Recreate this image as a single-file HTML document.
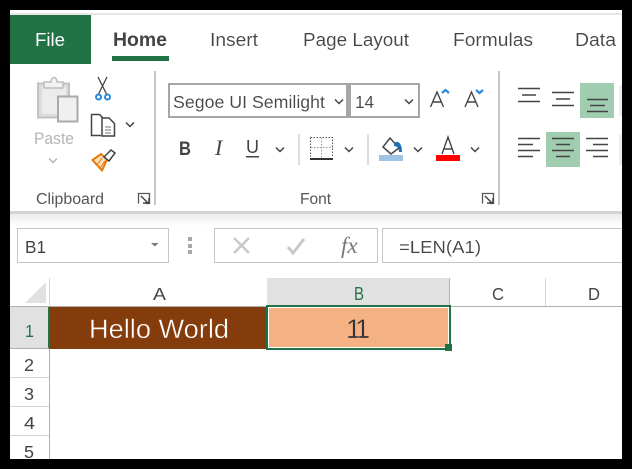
<!DOCTYPE html>
<html><head><meta charset="utf-8"><style>
html,body{margin:0;padding:0;background:#000;width:632px;height:469px;overflow:hidden}
svg{display:block;position:absolute;left:0;top:0}
text{font-family:"Liberation Sans",sans-serif;fill:#444}
.t{stroke:#fff;stroke-width:.1px}
</style></head><body>
<svg width="632" height="469" viewBox="0 0 632 469" xmlns="http://www.w3.org/2000/svg">
<defs><linearGradient id="f" x1="0" y1="0" x2="0" y2="1"><stop offset="0" stop-color="#ececec"/><stop offset="1" stop-color="#fff"/></linearGradient></defs>
<rect width="632" height="469" fill="#000"/>
<rect x="10" y="10" width="612" height="449" fill="#fff"/>
<rect x="10" y="13" width="612" height="2" fill="#e6e6e6"/>
<!-- tabs -->
<rect x="10" y="15" width="81" height="49" fill="#217346"/>
<text x="35" y="46" font-size="18" textLength="30" lengthAdjust="spacingAndGlyphs" style="fill:#fff">File</text>
<text x="113" y="46" font-size="19" font-weight="bold" textLength="54" lengthAdjust="spacingAndGlyphs">Home</text>
<rect x="112" y="56" width="57" height="5" fill="#217346"/>
<text class="t" x="210" y="46" font-size="18" textLength="48" lengthAdjust="spacingAndGlyphs">Insert</text>
<text class="t" x="303" y="46" font-size="18" textLength="106" lengthAdjust="spacingAndGlyphs">Page Layout</text>
<text class="t" x="453" y="46" font-size="18" textLength="80" lengthAdjust="spacingAndGlyphs">Formulas</text>
<text class="t" x="575" y="46" font-size="18" textLength="41" lengthAdjust="spacingAndGlyphs">Data</text>
<!-- clipboard group -->
<path d="M38 83.500h31v34H38z" fill="#dcdcdc" stroke="#c2c2c2" stroke-width="2"/>
<rect x="42" y="87" width="24" height="27" fill="#ececec"/>
<path d="M44 82h7c0-6 6-6 6 0h6v6H44z" fill="#f2f2f2" stroke="#bdbdbd" stroke-width="1.500"/>
<path d="M58 96.500h19.500v25H58z" fill="#f0f0f0" stroke="#a9a9a9" stroke-width="2"/>
<text x="34" y="144" font-size="17" textLength="40" lengthAdjust="spacingAndGlyphs" style="fill:#b5b5b5">Paste</text>
<path d="M49 158.500l4 4 4-4" fill="none" stroke="#b5b5b5" stroke-width="1.500"/>
<path d="M98 77l8.500 17M107 77l-8.500 17" fill="none" stroke="#444" stroke-width="1.300"/>
<circle cx="98.500" cy="97" r="2.500" fill="#fff" stroke="#2b88d8" stroke-width="2"/>
<circle cx="107.500" cy="97" r="2.500" fill="#fff" stroke="#2b88d8" stroke-width="2"/>
<path d="M101 135.500h-9.500v-21h8l3 3" fill="none" stroke="#444" stroke-width="1.500"/>
<path d="M102 118h7l5.500 5.500V136H102z" fill="#fff" stroke="#444" stroke-width="1.500"/>
<path d="M105 127h6M105 130h6M105 133h6" stroke="#777" stroke-width="1"/>
<path d="M126 122.500l4 4 4-4" fill="none" stroke="#444" stroke-width="1.500"/>
<path d="M92.500 160l9.500 10.500 5-11-6-5.500z" fill="#fbe0b8" stroke="#e3780c" stroke-width="2"/>
<path d="M97 165l5-7M100 168l5-7" stroke="#e3780c" stroke-width="1"/>
<path d="M104 157l7-7 4 3-6 8z" fill="#fff" stroke="#444" stroke-width="1.500"/>
<text x="36" y="204" font-size="15.500" textLength="68" lengthAdjust="spacingAndGlyphs" style="fill:#555">Clipboard</text>
<path d="M138.500 203.500v-10h10M145 193.500h4.500v10h-4" fill="none" stroke="#555" stroke-width="1.300"/>
<path d="M141 196l7 7M143 203h6v-5" fill="none" stroke="#444" stroke-width="1.500"/>
<rect x="154" y="71" width="2" height="134" fill="#c6c6c6"/>
<!-- font -->
<rect x="169" y="84" width="178" height="33" fill="#fff" stroke="#a6a6a6" stroke-width="2"/>
<rect x="350" y="84" width="69" height="33" fill="#fff" stroke="#a6a6a6" stroke-width="2"/>
<rect x="347" y="83" width="4" height="35" fill="#a6a6a6"/>
<text class="t" x="173" y="108" font-size="17.500" textLength="152" lengthAdjust="spacingAndGlyphs">Segoe UI Semilight</text>
<path d="M335 99.500l4 4 4-4M405 99.500l4 4 4-4" fill="none" stroke="#444" stroke-width="1.500"/>
<text class="t" x="355" y="108" font-size="17.500" textLength="19" lengthAdjust="spacingAndGlyphs">14</text>
<path d="M430.500 107l6.500-15 6.500 15M433 102h8.500" fill="none" stroke="#444" stroke-width="1.400"/>
<path d="M465 107l6.500-15 6.500 15M467.500 102h8.500" fill="none" stroke="#444" stroke-width="1.400"/>
<path d="M442 93l3.500-3 3.500 3" fill="none" stroke="#2b88d8" stroke-width="2.200"/>
<path d="M476 90l3.500 3 3.500-3" fill="none" stroke="#2b88d8" stroke-width="2.200"/>
<rect x="498" y="71" width="2" height="134" fill="#c6c6c6"/>
<text x="179" y="155" font-size="19" font-weight="bold" textLength="12" lengthAdjust="spacingAndGlyphs">B</text>
<text x="215" y="155" font-size="22" font-style="italic" style="font-family:'Liberation Serif',serif">I</text>
<text x="246" y="153" font-size="18" textLength="13" lengthAdjust="spacingAndGlyphs">U</text>
<rect x="246" y="156" width="13" height="1.500" fill="#444"/>
<path d="M276 147.500l4 4 4-4M345 147.500l4 4 4-4M414 147.500l4 4 4-4M471 147.500l4 4 4-4" fill="none" stroke="#444" stroke-width="1.500"/>
<rect x="298" y="134" width="2" height="31" fill="#dcdcdc"/>
<rect x="367" y="134" width="2" height="31" fill="#dcdcdc"/>
<path d="M310.500 137.500h22v20M310.500 137.500v20" fill="none" stroke="#555" stroke-width="1" stroke-dasharray="1.500 1.500"/>
<path d="M321.500 138v20M311 147.500h22" fill="none" stroke="#999" stroke-width="1" stroke-dasharray="1.500 1.500"/>
<rect x="310" y="158" width="23" height="2" fill="#333"/>
<path d="M383 147l7-9 9 10-8 6z" fill="#fff" stroke="#444" stroke-width="1.500"/>
<path d="M394 143c4-3 8 0 8 9h-3c0-4-2-6-5-6z" fill="#1f6fb2"/>
<rect x="379" y="155" width="24" height="6" fill="#9dc3e6"/>
<path d="M442 154l6-17 6 17M444 149h8" fill="none" stroke="#444" stroke-width="1.400"/>
<rect x="436" y="155" width="24" height="6" fill="#f00"/>
<text x="300" y="204" font-size="15.500" textLength="31" lengthAdjust="spacingAndGlyphs" style="fill:#555">Font</text>
<path d="M482.500 203.500v-10h10M489 193.500h4.500v10h-4" fill="none" stroke="#555" stroke-width="1.300"/>
<path d="M485 196l7 7M487 203h6v-5" fill="none" stroke="#444" stroke-width="1.500"/>
<!-- alignment -->
<rect x="580" y="83" width="34" height="35" fill="#a0ccb0"/>
<rect x="546" y="132" width="34" height="35" fill="#a0ccb0"/>
<g stroke="#444" stroke-width="1.500" fill="none">
<path d="M518 88.500h22M522 95h14M518 101.500h22"/>
<path d="M552 92.500h22M556 99h14M552 105.500h22"/>
<path d="M587 99.500h21M590 105.500h15M587 111.500h21"/>
<path d="M518 138.500h22M518 144.500h15M518 150.500h22M518 156.500h15"/>
<path d="M552 138.500h22M556 144.500h14M552 150.500h22M556 156.500h14"/>
<path d="M586 138.500h22M593 144.500h15M586 150.500h22M593 156.500h15"/>
</g>
<rect x="619" y="85" width="3" height="31" fill="#eee"/>
<rect x="619" y="134" width="3" height="31" fill="#eee"/>
<!-- ribbon bottom -->
<rect x="10" y="211" width="612" height="3" fill="#d4d4d4"/>
<rect x="10" y="214" width="612" height="12" fill="url(#f)"/>
<!-- formula bar -->
<rect x="17.500" y="228.500" width="151" height="34" fill="#fff" stroke="#c6c6c6"/>
<text x="25" y="253" font-size="17.500" textLength="21" lengthAdjust="spacingAndGlyphs">B1</text>
<path d="M151 243h7.500l-3.700 3.500z" fill="#777"/>
<rect x="188" y="237" width="4" height="4" fill="#a8a8a8"/><rect x="188" y="244" width="4" height="4" fill="#a8a8a8"/><rect x="188" y="250" width="4" height="4" fill="#a8a8a8"/>
<rect x="214.500" y="228.500" width="163" height="34" fill="#fff" stroke="#c6c6c6"/>
<path d="M234 238l15 15M249 238l-15 15" stroke="#c9c9c9" stroke-width="2.500"/>
<path d="M288 247l5 6 11-14" fill="none" stroke="#c9c9c9" stroke-width="3"/>
<text x="341" y="253" font-size="23" font-style="italic" style="font-family:'Liberation Serif',serif;fill:#777">fx</text>
<rect x="382.500" y="228.500" width="260" height="34" fill="#fff" stroke="#c6c6c6"/>
<text class="t" x="399" y="253" font-size="17.500" textLength="82" lengthAdjust="spacingAndGlyphs">=LEN(A1)</text>
<rect x="622" y="220" width="10" height="60" fill="#000"/>
<!-- grid headers -->
<path d="M25 303l21-21v21z" fill="#e1e1e1"/>
<rect x="49" y="278" width="1" height="28" fill="#d4d4d4"/>
<rect x="267" y="278" width="182" height="28" fill="#e1e1e1"/>
<rect x="449" y="278" width="1" height="28" fill="#b5b5b5"/>
<rect x="545" y="278" width="1" height="28" fill="#d4d4d4"/>
<rect x="10" y="306" width="612" height="1" fill="#b0b0b0"/>
<text x="153" y="300" font-size="17.500" textLength="13" lengthAdjust="spacingAndGlyphs">A</text>
<text x="354" y="300" font-size="18" textLength="10" lengthAdjust="spacingAndGlyphs" style="fill:#217346">B</text>
<text x="492" y="300" font-size="17.500" textLength="12" lengthAdjust="spacingAndGlyphs">C</text>
<text x="588" y="300" font-size="17.500" textLength="12" lengthAdjust="spacingAndGlyphs">D</text>
<!-- row headers -->
<rect x="10" y="307" width="38" height="42" fill="#e1e1e1"/>
<rect x="48" y="307" width="2" height="42" fill="#217346"/>
<rect x="49" y="349" width="1" height="110" fill="#b0b0b0"/>
<rect x="10" y="348" width="39" height="1" fill="#b0b0b0"/>
<rect x="10" y="377" width="39" height="1" fill="#d4d4d4"/>
<rect x="10" y="406" width="39" height="1" fill="#d4d4d4"/>
<rect x="10" y="435" width="39" height="1" fill="#d4d4d4"/>
<text x="25" y="337" font-size="17.500" textLength="9" lengthAdjust="spacingAndGlyphs" style="fill:#217346">1</text>
<text x="24" y="371" font-size="17.500" textLength="10" lengthAdjust="spacingAndGlyphs">2</text>
<text x="24" y="400" font-size="17.500" textLength="10" lengthAdjust="spacingAndGlyphs">3</text>
<text x="24" y="429" font-size="17.500" textLength="11" lengthAdjust="spacingAndGlyphs">4</text>
<text x="24" y="458" font-size="17.500" textLength="10" lengthAdjust="spacingAndGlyphs">5</text>
<!-- cells -->
<rect x="50" y="307" width="217" height="42" fill="#843c0c"/>
<text x="89" y="338" font-size="27" textLength="140" lengthAdjust="spacingAndGlyphs" style="fill:#fff;stroke:#843c0c;stroke-width:.4px">Hello World</text>
<rect x="267" y="307" width="182" height="42" fill="#f4b183"/>
<rect x="268.500" y="307.500" width="180" height="40" fill="none" stroke="#fff" stroke-width="1"/>
<rect x="267" y="306" width="183" height="43" fill="none" stroke="#217346" stroke-width="2"/>
<rect x="445" y="344" width="7" height="7" fill="#217346"/>
<text x="346" y="338" font-size="27" letter-spacing="-4" style="fill:#333;stroke:#f4b183;stroke-width:.3px">11</text>
</svg>
</body></html>
